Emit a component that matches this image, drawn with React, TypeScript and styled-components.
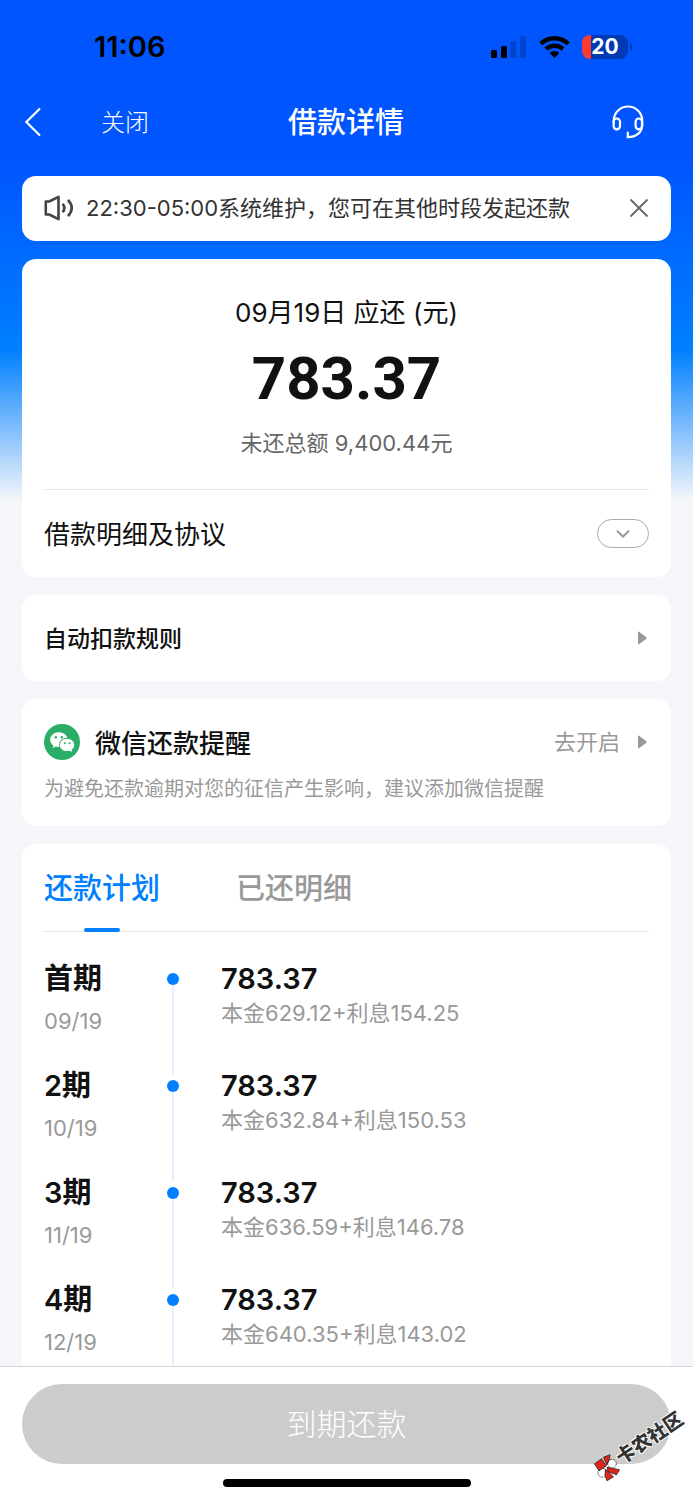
import React, { useState } from 'react';
import styled, { createGlobalStyle } from 'styled-components';

const GlobalStyle = createGlobalStyle`
  *, *::before, *::after { box-sizing: border-box; }
  body {
    margin: 0;
    background: #f4f6fa;
    color: #111;
    font-family: Inter, "Noto Sans CJK SC", sans-serif;
  }
  h1, h2, p, ul { margin: 0; padding: 0; font-weight: inherit; }
  ul { list-style: none; }
  button {
    margin: 0;
    padding: 0;
    border: 0;
    background: none;
    color: inherit;
    font: inherit;
    cursor: pointer;
  }
  svg { display: block; flex: none; }
`;

const Screen = styled.div`
  position: relative;
  display: flex;
  flex-direction: column;
  height: 100vh;
  background: linear-gradient(#0055ff 0, #0055ff 160px, #0080ff 350px, #f4f6fa 500px);
`;

const StatusBar = styled.div`
  display: flex;
  flex: none;
  align-items: center;
  justify-content: space-between;
  height: 94px;
  padding: 0 61px 0 94px;
  color: #000;
`;

const Clock = styled.span`
  font-size: 29px;
  line-height: 34px;
  font-weight: 600;
`;

const StatusIcons = styled.div`
  display: flex;
  align-items: center;
  gap: 12px;
`;

const Battery = styled.div`
  display: flex;
  align-items: center;
  gap: 2px;
`;

const BatteryBody = styled.div`
  width: 46px;
  height: 24px;
  border-radius: 8px;
  background: linear-gradient(90deg, #ff3b30 0, #ff3b30 9px, #003bb3 9px);
  color: #fff;
  font-size: 21px;
  line-height: 24px;
  font-weight: 700;
  text-align: center;
`;

const BatteryTip = styled.div`
  width: 2px;
  height: 8px;
  border-radius: 0 2px 2px 0;
  background: #003bb3;
`;

const NavBar = styled.header`
  display: grid;
  flex: none;
  grid-template-columns: 1fr auto 1fr;
  align-items: center;
  height: 56px;
  padding: 0 49px 0 24px;
  color: #fff;
`;

const NavLeft = styled.div`
  display: flex;
  align-items: center;
  gap: 59px;
`;

const CloseButton = styled.button`
  padding-top: 2px;
  font-size: 24px;
  line-height: 32px;
  font-weight: 300;
`;

const NavTitle = styled.h1`
  padding-top: 2px;
  padding-left: 24px;
  font-size: 29px;
  line-height: 40px;
  font-weight: 500;
`;

const NavRight = styled.div`
  display: flex;
  justify-content: flex-end;
`;

const Content = styled.main`
  display: flex;
  flex: 1;
  flex-direction: column;
  gap: 18px;
  min-height: 0;
  padding: 26px 22px 0;
  overflow-y: auto;
  scrollbar-width: none;
`;

const Card = styled.section`
  flex: none;
  padding: 0 22px;
  border-radius: 14px;
  background: #fff;
`;

const NoticeCard = styled(Card)`
  display: flex;
  align-items: center;
  gap: 12px;
  height: 65px;
  padding-bottom: 2px;
  color: #333;
`;

const NoticeText = styled.p`
  flex: 1;
  font-size: 22px;
  line-height: 30px;
`;

const Summary = styled.div`
  display: flex;
  flex-direction: column;
  align-items: center;
  height: 231px;
  padding-top: 36px;
  border-bottom: 1px solid #e8e8e8;
`;

const DueLabel = styled.p`
  font-size: 26px;
  line-height: 36px;
`;

const DueAmount = styled.p`
  margin: 12px 0;
  font-family: Roboto, sans-serif;
  font-size: 60px;
  line-height: 72px;
  font-weight: 700;
`;

const Outstanding = styled.p`
  color: #666;
  font-size: 22px;
  line-height: 32px;
`;

const RowButton = styled.button<{ $height: number }>`
  display: flex;
  align-items: center;
  justify-content: space-between;
  width: 100%;
  height: ${(p) => p.$height}px;
  text-align: left;
`;

const RowText = styled.span<{ $strong?: boolean }>`
  padding-top: 2px;
  font-size: ${(p) => (p.$strong ? 23 : 26)}px;
  line-height: 36px;
  font-weight: ${(p) => (p.$strong ? 500 : 400)};
`;

const Expander = styled.span`
  display: flex;
  align-items: center;
  justify-content: center;
  width: 52px;
  height: 29px;
  border: 1px solid #aaa;
  border-radius: 15px;
`;

const WeChatCard = styled(Card)`
  padding-top: 25px;
  padding-bottom: 23px;
`;

const WeChatHead = styled.div`
  display: flex;
  align-items: center;
  height: 36px;
  gap: 15px;
`;

const WeChatTitle = styled.h2`
  flex: 1;
  padding-top: 4px;
  font-size: 26px;
  line-height: 36px;
  font-weight: 500;
`;

const EnableButton = styled.button`
  display: flex;
  align-items: center;
  gap: 18px;
  color: #999;
  font-size: 22px;
  line-height: 30px;
`;

const Hint = styled.p`
  margin-top: 15px;
  color: #999;
  font-size: 20px;
  line-height: 28px;
`;

const PlanCard = styled(Card)`
  border-radius: 14px 14px 0 0;
`;

const Tabs = styled.div`
  display: flex;
  gap: 76px;
  height: 88px;
  border-bottom: 1px solid #e8e8e8;
`;

const Tab = styled.button<{ $active: boolean }>`
  position: relative;
  padding-top: 2px;
  color: ${(p) => (p.$active ? '#0080ff' : '#999')};
  font-size: 29px;
  line-height: 40px;
  font-weight: 500;

  &::after {
    content: '';
    position: absolute;
    bottom: -1px;
    left: 50%;
    width: 36px;
    height: 4px;
    margin-left: -18px;
    border-radius: 2px;
    background: ${(p) => (p.$active ? '#0080ff' : 'transparent')};
  }
`;

const PlanList = styled.ul`
  padding-top: 35px;
`;

const PlanRow = styled.li`
  display: grid;
  grid-template-columns: 123px 12px 1fr;
  height: 107px;
`;

const Rail = styled.div`
  display: flex;
  flex-direction: column;
  align-items: center;
  padding-top: 6px;

  &::before {
    content: '';
    width: 12px;
    height: 12px;
    border-radius: 50%;
    background: #0080ff;
  }

  &::after {
    content: '';
    flex: 1;
    width: 2px;
    background: #e3f1ff;
  }
`;

const PlanCell = styled.div<{ $gap: number; $inset?: number }>`
  display: flex;
  flex-direction: column;
  gap: ${(p) => p.$gap}px;
  padding-left: ${(p) => p.$inset ?? 0}px;
`;

const PlanStrong = styled.span`
  font-size: 29px;
  line-height: 24px;
  font-weight: 600;
`;

const PlanMuted = styled.span`
  color: #999;
  font-size: 22px;
  line-height: 24px;
`;

const Footer = styled.footer`
  display: flex;
  flex: none;
  flex-direction: column;
  align-items: center;
  padding: 17px 22px 13px;
  border-top: 1px solid #d2d3d6;
  background: #fff;
`;

const PayButton = styled.button`
  width: 100%;
  height: 80px;
  margin-bottom: 15px;
  border-radius: 40px;
  background: #ccc;
  color: #fff;
  font-size: 30px;
  line-height: 40px;
  font-weight: 300;
`;

const HomeIndicator = styled.div`
  width: 248px;
  height: 8px;
  border-radius: 4px;
  background: #000;
`;

const Watermark = styled.div`
  position: absolute;
  right: 3px;
  bottom: 41px;
  display: flex;
  align-items: center;
  color: #333;
  font-size: 19px;
  line-height: 26px;
  font-weight: 900;
  text-shadow: 1px 0 #fff, -1px 0 #fff, 0 1px #fff, 0 -1px #fff;
  transform: rotate(-34deg);
  pointer-events: none;
`;

const SignalIcon = () => (
  <svg width="36" height="22" viewBox="0 0 36 22">
    <rect x="0" y="14" width="6" height="8" rx="1.5" />
    <rect x="10" y="10" width="6" height="12" rx="1.5" />
    <rect x="19.5" y="5" width="6" height="17" rx="1.5" opacity="0.2" />
    <rect x="29" y="0" width="6" height="22" rx="1.5" opacity="0.2" />
  </svg>
);

const WifiIcon = () => (
  <svg width="31" height="22" viewBox="0 0 31 22">
    <path d="M15.5 0C21.3 0 26.7 2.2 30.8 6.2L27.7 9.3C24.4 6.2 20.2 4.4 15.5 4.4S6.6 6.2 3.3 9.3L.2 6.2C4.3 2.2 9.7 0 15.5 0Z" />
    <path d="M15.5 7.6C19.3 7.6 22.8 9.1 25.5 11.6L22.3 14.7C20.5 13 18.1 12 15.5 12S10.5 13 8.7 14.7L5.5 11.6C8.2 9.1 11.7 7.6 15.5 7.6Z" />
    <path d="M15.5 15C17.3 15 19 15.7 20.3 16.9L15.5 22L10.7 16.9C12 15.7 13.7 15 15.5 15Z" />
  </svg>
);

const BackIcon = () => (
  <svg width="18" height="30" viewBox="0 0 18 30" fill="none" stroke="#fff" strokeWidth="2.2">
    <path d="M16 1.5L2.3 15L16 28.5" />
  </svg>
);

const HeadsetIcon = () => (
  <svg width="32" height="34" viewBox="0 0 32 34" fill="none" stroke="#fff" strokeWidth="2.2" strokeLinecap="round">
    <path d="M1.8 18V14.5C2.5 7 8.5 1.500 16 1.500S29.500 7 30.200 14.500V20C30.200 27.500 24 32.200 15.800 32.200V27.700" />
    <rect x="1.6" y="13.500" width="6.400" height="10.800" rx="3.200" />
    <rect x="23.600" y="13.500" width="6.400" height="10.800" rx="3.200" />
  </svg>
);

const SpeakerIcon = () => (
  <svg width="30" height="26" viewBox="0 0 30 26" fill="none" stroke="#444" strokeWidth="2.6" strokeLinejoin="round">
    <path d="M1.8 6.500H5.200L14.500 1.800V24.200L5.200 19.500H1.800Z" />
    <path d="M18.700 8.800Q22 13 18.700 17.200" />
    <path d="M24 5Q31.500 13 24 21" />
  </svg>
);

const CloseIcon = () => (
  <svg width="20" height="20" viewBox="0 0 20 20" fill="none" stroke="#666" strokeWidth="1.8">
    <path d="M1.500 1.500L18.500 18.500M18.500 1.500L1.500 18.500" />
  </svg>
);

const ChevronDown = () => (
  <svg width="14" height="8" viewBox="0 0 14 8" fill="none" stroke="#999" strokeWidth="2" strokeLinecap="round">
    <path d="M1.500 1.200L7 6.500L12.500 1.200" />
  </svg>
);

const ArrowIcon = () => (
  <svg width="11" height="14" viewBox="0 0 11 14" fill="#999">
    <path d="M0 1.200Q0 .2 1 .8L8.400 6.300Q9.200 7 8.400 7.700L1 13.200Q0 13.800 0 12.800Z" />
  </svg>
);

const WeChatIcon = () => (
  <svg width="36" height="36" viewBox="0 0 36 36">
    <circle cx="18" cy="18" r="18" fill="#2aae67" />
    <path
      d="M14.800 8.300C9.900 8.300 6.200 11.600 6.200 15.700C6.200 18.100 7.400 20.200 9.400 21.500L8.800 24.100L11.800 22.600C12.900 22.900 13.900 23.100 15.500 23C13.900 17.600 18.200 13.600 23.300 13.700C22.300 10.400 18.800 8.300 14.800 8.300Z"
      fill="#fff"
    />
    <path
      d="M23.100 14.700C18.900 14.700 15.900 17.500 15.900 20.900S18.900 27.100 23.100 27.100C24.100 27.100 24.900 26.900 25.700 26.700L28.200 28L27.600 25.700C29.300 24.500 30.200 22.800 30.200 20.900C30.200 17.500 27.200 14.700 23.100 14.700Z"
      fill="#fff"
    />
    <g fill="#2aae67">
      <circle cx="11.800" cy="13.300" r="1.200" />
      <circle cx="17.800" cy="13.300" r="1.200" />
      <circle cx="20.800" cy="19.200" r="1" />
      <circle cx="25.500" cy="19.200" r="1" />
    </g>
  </svg>
);

const CommunityLogo = () => (
  <svg width="26" height="26" viewBox="0 0 26 26" overflow="visible" stroke="#222" strokeWidth="0.8">
    <g transform="rotate(34 13 13)">
      <circle cx="17.500" cy="9.500" r="4.300" fill="#fff" strokeDasharray="2 1" />
      <circle cx="8" cy="18.500" r="4.500" fill="#fff" strokeDasharray="2 1" />
      <g fill="#e1251b">
        <path d="M0 9.500L7 4.500L12 11.500L4.500 16.500Z" />
        <path d="M9 3L15.500 .5L15 5L12.500 10.500Z" />
        <path d="M12.500 13L25 15.500L22 20.500L13.500 17.500Z" />
        <path d="M11 15L19 22.500L12.500 26.500L10.500 21Z" />
      </g>
    </g>
  </svg>
);

const installments = [
  { term: '首期', date: '09/19', amount: '783.37', detail: '本金629.12+利息154.25' },
  { term: '2期', date: '10/19', amount: '783.37', detail: '本金632.84+利息150.53' },
  { term: '3期', date: '11/19', amount: '783.37', detail: '本金636.59+利息146.78' },
  { term: '4期', date: '12/19', amount: '783.37', detail: '本金640.35+利息143.02' },
];

const tabs = ['还款计划', '已还明细'];

export default function App() {
  const [activeTab, setActiveTab] = useState(0);

  return (
    <>
      <GlobalStyle />
      <Screen>
        <StatusBar>
          <Clock>11:06</Clock>
          <StatusIcons>
            <SignalIcon />
            <WifiIcon />
            <Battery>
              <BatteryBody>20</BatteryBody>
              <BatteryTip />
            </Battery>
          </StatusIcons>
        </StatusBar>

        <NavBar>
          <NavLeft>
            <button type="button" aria-label="返回">
              <BackIcon />
            </button>
            <CloseButton type="button">关闭</CloseButton>
          </NavLeft>
          <NavTitle>借款详情</NavTitle>
          <NavRight>
            <button type="button" aria-label="客服">
              <HeadsetIcon />
            </button>
          </NavRight>
        </NavBar>

        <Content>
          <NoticeCard>
            <SpeakerIcon />
            <NoticeText>22:30-05:00系统维护，您可在其他时段发起还款</NoticeText>
            <button type="button" aria-label="关闭通知">
              <CloseIcon />
            </button>
          </NoticeCard>

          <Card>
            <Summary>
              <DueLabel>09月19日 应还 (元)</DueLabel>
              <DueAmount>783.37</DueAmount>
              <Outstanding>未还总额 9,400.44元</Outstanding>
            </Summary>
            <RowButton type="button" $height={87}>
              <RowText>借款明细及协议</RowText>
              <Expander>
                <ChevronDown />
              </Expander>
            </RowButton>
          </Card>

          <Card>
            <RowButton type="button" $height={86}>
              <RowText $strong>自动扣款规则</RowText>
              <ArrowIcon />
            </RowButton>
          </Card>

          <WeChatCard>
            <WeChatHead>
              <WeChatIcon />
              <WeChatTitle>微信还款提醒</WeChatTitle>
              <EnableButton type="button">
                去开启
                <ArrowIcon />
              </EnableButton>
            </WeChatHead>
            <Hint>为避免还款逾期对您的征信产生影响，建议添加微信提醒</Hint>
          </WeChatCard>

          <PlanCard>
            <Tabs role="tablist">
              {tabs.map((label, index) => (
                <Tab
                  key={label}
                  type="button"
                  role="tab"
                  aria-selected={index === activeTab}
                  $active={index === activeTab}
                  onClick={() => setActiveTab(index)}
                >
                  {label}
                </Tab>
              ))}
            </Tabs>
            <PlanList>
              {installments.map((item) => (
                <PlanRow key={item.term}>
                  <PlanCell $gap={18}>
                    <PlanStrong>{item.term}</PlanStrong>
                    <PlanMuted>{item.date}</PlanMuted>
                  </PlanCell>
                  <Rail />
                  <PlanCell $gap={10} $inset={42}>
                    <PlanStrong>{item.amount}</PlanStrong>
                    <PlanMuted>{item.detail}</PlanMuted>
                  </PlanCell>
                </PlanRow>
              ))}
            </PlanList>
          </PlanCard>
        </Content>

        <Footer>
          <PayButton type="button">到期还款</PayButton>
          <HomeIndicator />
        </Footer>

        <Watermark>
          <CommunityLogo />
          卡农社区
        </Watermark>
      </Screen>
    </>
  );
}
